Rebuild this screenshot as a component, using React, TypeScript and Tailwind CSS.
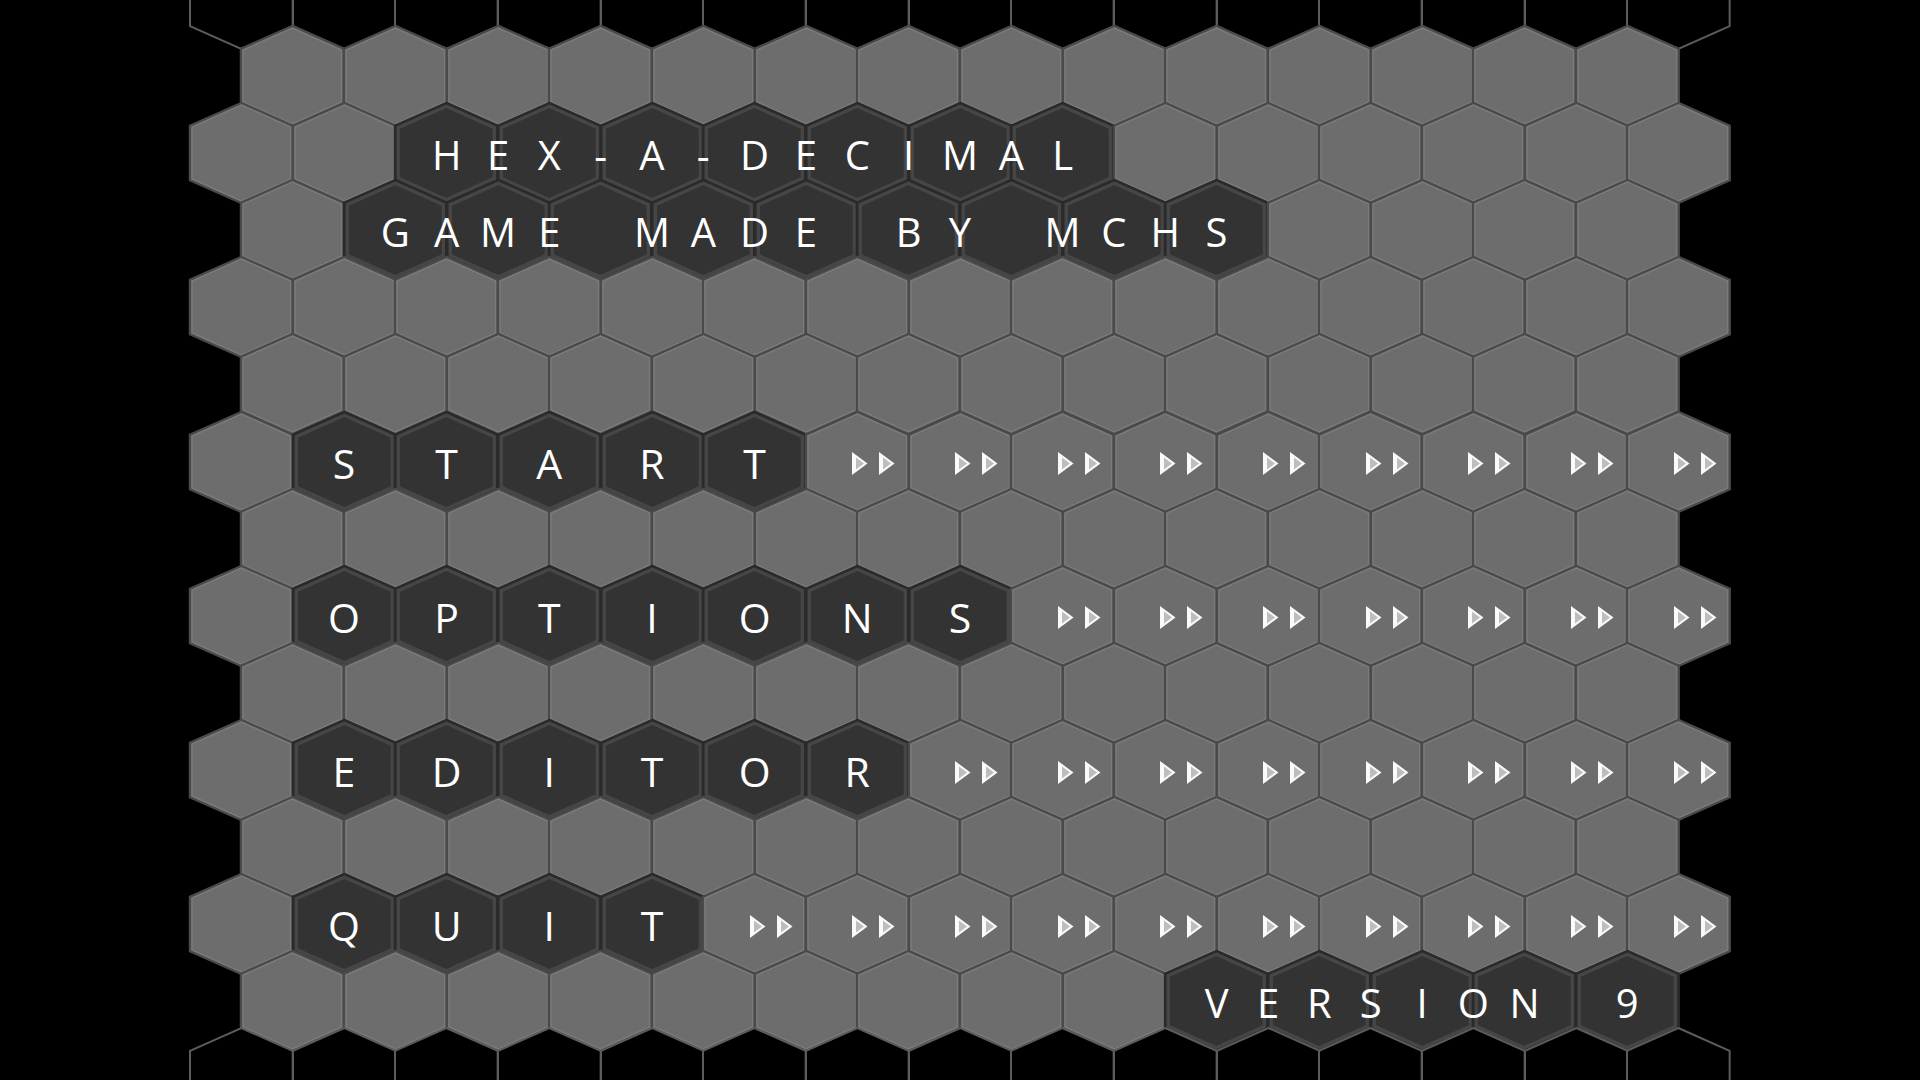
import type { ReactNode } from "react";

// Hex-a-decimal title screen: flow layout of pointy-top hex rows.
const W = 102.67;
const H = 100;
const T = 22.9;
const PTS = `${W / 2},0 ${W},${T} ${W},${H - T} ${W / 2},${H} 0,${H - T} 0,${T}`;

type Kind = "light" | "dark" | "void";

function HexShape({ kind }: { kind: Kind }) {
  const cx = W / 2;
  const cy = H / 2;
  if (kind === "void") {
    return (
      <svg className="absolute inset-0 overflow-visible" width={W} height={H} viewBox={`0 0 ${W} ${H}`}>
        <polygon points={PTS} fill="#000" stroke="#5c5c5c" strokeWidth={2} />
      </svg>
    );
  }
  const dark = kind === "dark";
  const s = dark ? 0.935 : 0.96;
  return (
    <svg className="absolute inset-0 overflow-visible" width={W} height={H} viewBox={`0 0 ${W} ${H}`}>
      <polygon points={PTS} fill={dark ? "#333333" : "#6d6d6d"} stroke={dark ? "#2a2a2a" : "#4a4a4a"} strokeWidth={2.5} />
      <polygon
        points={PTS}
        fill="none"
        stroke={dark ? "#464646" : "#7a7a7a"}
        strokeWidth={dark ? 3.5 : 1.5}
        transform={`translate(${cx} ${cy}) scale(${s}) translate(${-cx} ${-cy})`}
      />
    </svg>
  );
}

function Arrows() {
  return (
    <svg className="relative ml-[34px] mt-[4px]" width={44} height={23} viewBox="0 0 44 23">
      <polygon points="0,0 15.5,11.5 0,23" fill="#fafafa" />
      <polygon points="4,5.5 12,11.5 4,17.5" fill="#bdbdbd" />
      <polygon points="27,0 42.5,11.5 27,23" fill="#fafafa" />
      <polygon points="31,5.5 39,11.5 31,17.5" fill="#bdbdbd" />
    </svg>
  );
}

function Hex({ kind, children }: { kind: Kind; children?: ReactNode }) {
  return (
    <div className="relative w-[102.67px] h-[100px] shrink-0 flex items-center justify-center">
      <HexShape kind={kind} />
      {children}
    </div>
  );
}

function Letter({ ch }: { ch: string }) {
  return <span className="relative text-[41px] font-medium leading-none text-white pt-[3px]">{ch}</span>;
}

const menus: Record<number, string> = { 5: "START", 7: "OPTIONS", 9: "EDITOR", 11: "QUIT" };

function cellFor(r: number, k: number): { kind: Kind; content?: ReactNode } {
  if (r === -1 || r === 13) return { kind: "void" };
  if (r === 1 && k >= 2 && k <= 8) return { kind: "dark" };
  if (r === 2 && k >= 1 && k <= 9) return { kind: "dark" };
  if (r === 12 && k >= 9) return { kind: "dark" };
  const word = menus[r];
  if (word) {
    if (k >= 1 && k <= word.length) return { kind: "dark", content: <Letter ch={word[k - 1]} /> };
    if (k > word.length) return { kind: "light", content: <Arrows /> };
  }
  return { kind: "light" };
}

function Spaced({ text, className }: { text: string; className: string }) {
  return (
    <div className={`absolute top-0 h-full flex items-center ${className}`}>
      {text.split("").map((c, i) => (
        <span key={i} className="w-[51.33px] text-center text-[40px] font-medium leading-none text-white pt-[3px]">
          {c === " " ? "\u00a0" : c}
        </span>
      ))}
    </div>
  );
}

const titles: Record<number, ReactNode> = {
  1: <Spaced text="HEX-A-DECIMAL" className="left-[421px]" />,
  2: <Spaced text="GAME MADE BY MCHS" className="left-[369.67px]" />,
  12: <Spaced text="VERSION 9" className="left-[1191px]" />,
};

export default function App() {
  const rows = Array.from({ length: 15 }, (_, i) => i - 1);
  return (
    <div
      className="w-[1920px] h-[1080px] bg-black overflow-hidden"
      style={{ fontFamily: '"Open Sans", "Noto Sans", sans-serif' }}
    >
      <div className="flex flex-col">
        {rows.map((r) => {
          const odd = Math.abs(r) % 2 === 1;
          const count = odd ? 15 : 14;
          return (
            <div
              key={r}
              className={`relative flex h-[100px] ${odd ? "pl-[190px]" : "pl-[241.33px]"} ${
                r === -1 ? "-mt-[51.08px]" : "-mt-[22.9px]"
              }`}
            >
              {Array.from({ length: count }, (_, k) => {
                const c = cellFor(r, k);
                return (
                  <Hex key={k} kind={c.kind}>
                    {c.content}
                  </Hex>
                );
              })}
              {titles[r]}
            </div>
          );
        })}
      </div>
    </div>
  );
}
